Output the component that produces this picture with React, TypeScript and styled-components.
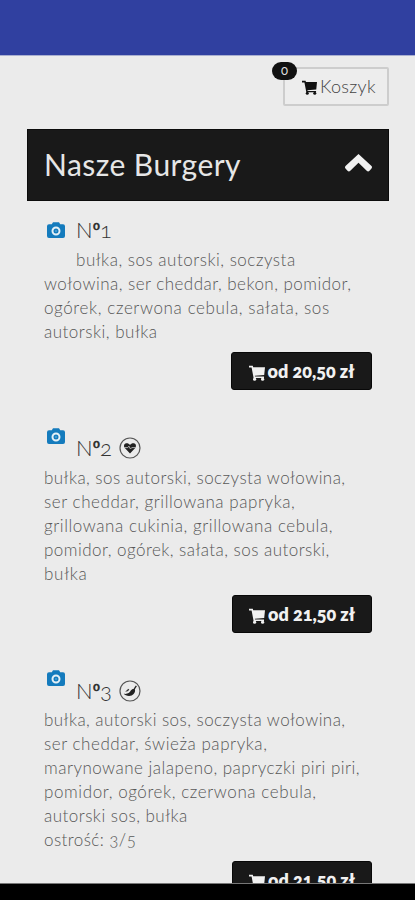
import React from 'react';
import styled, { createGlobalStyle } from 'styled-components';

const Global = createGlobalStyle`
  * { box-sizing: border-box; }
  html, body { margin: 0; background: #ebebeb; }
  body { font-family: Lato, "Open Sans", sans-serif; font-feature-settings: "onum" 1; }
`;

const Screen = styled.div`
  width: 415px;
  height: 900px;
  overflow: hidden;
  display: flex;
  flex-direction: column;
  background: #ebebeb;
`;

const StatusBar = styled.header`
  flex: 0 0 56px;
  background: #3040a0;
  border-bottom: 1px solid #a9afd0;
`;

const Content = styled.main`
  flex: 1;
  min-height: 0;
  overflow: hidden;
  padding: 11px 26px 0 27px;
`;

const NavBar = styled.footer`
  flex: 0 0 17px;
  background: #000;
  border-top: 1px solid #777;
`;

const CartRow = styled.div`
  display: flex;
  justify-content: flex-end;
  margin-bottom: 23px;
`;

const CartButton = styled.button`
  position: relative;
  display: flex;
  align-items: center;
  gap: 3px;
  width: 106px;
  height: 39px;
  padding: 0 0 2px 17px;
  border: 2px solid #cdcdcd;
  border-radius: 2px;
  background: #ededed;
  color: #444;
  font: 300 18px Lato, sans-serif;
  letter-spacing: 0.3px;
`;

const Badge = styled.span`
  position: absolute;
  left: -13px;
  top: -7px;
  width: 25px;
  height: 18px;
  border-radius: 9px;
  background: #111;
  color: #ddd;
  font: 400 13px/17px Lato, sans-serif;
  font-feature-settings: "onum" 1;
  letter-spacing: 0;
  text-align: center;
`;

const SectionHeader = styled.h1`
  display: flex;
  align-items: center;
  justify-content: space-between;
  height: 72px;
  margin: 0;
  padding: 0 16px 2px;
  background: #191919;
  border: 1px solid #0b0b0b;
  color: #e6e6e6;
  font-weight: 400;
  font-size: 30px;
  letter-spacing: 0.45px;
`;

const Item = styled.article`
  display: flex;
  flex-direction: column;
  padding: 0 17px;
`;

const ItemHead = styled.div<{ $height: number; $drop: number }>`
  display: flex;
  align-items: flex-start;
  height: ${p => p.$height}px;
  padding-left: 3px;
  padding-top: ${p => p.$height - p.$drop}px;
`;

const ItemTitle = styled.h2<{ $offset: number }>`
  display: flex;
  align-items: center;
  gap: 7px;
  height: 26px;
  margin: ${p => p.$offset}px 0 0 11px;
  color: #333;
  font-weight: 300;
  font-size: 22px;
  line-height: 26px;
`;

const Ordinal = styled.span`
  font-family: "Liberation Sans", sans-serif;
  font-weight: 700;
  font-size: 20px;
  line-height: 1;
`;

const Line = styled.div<{ $track: number; $indent?: boolean }>`
  height: 24px;
  padding-left: ${p => (p.$indent ? 32 : 0)}px;
  color: #585858;
  font-weight: 300;
  font-size: 17px;
  line-height: 24px;
  letter-spacing: ${p => p.$track}px;
  white-space: nowrap;
`;

const PriceButton = styled.button<{ $width: number; $gap: number }>`
  align-self: flex-end;
  display: flex;
  align-items: center;
  justify-content: center;
  gap: 3px;
  width: ${p => p.$width}px;
  height: 38px;
  margin: ${p => p.$gap}px 0 0;
  padding: 0;
  border: 1px solid #080808;
  border-radius: 3px;
  background: #191919;
  color: #f1f1f1;
  font: 800 18px Lato, sans-serif;
  font-feature-settings: "onum" 1;
  white-space: nowrap;
`;

const IconShift = styled.span<{ $by: number }>`
  display: flex;
  padding-top: ${p => p.$by}px;
`;

const CartIcon = ({ color, size }: { color: string; size: number }) => (
  <svg width={size} height={size} viewBox="0 0 16 16" fill={color}>
    <path d="M0 .8h3.800l.4 1.400H16l-.8 7.800-9.400.8.2.8h9v1.500H4.600L2.600 2.600H0z" />
    <circle cx="5.600" cy="14.200" r="1.600" />
    <circle cx="13.600" cy="14.200" r="1.600" />
  </svg>
);

const CameraIcon = () => (
  <svg width="18" height="16" viewBox="0 0 18 16">
    <path d="M4.800 2.200 6 .3h6l1.200 1.900H16a2 2 0 0 1 2 2V14a2 2 0 0 1-2 2H2a2 2 0 0 1-2-2V4.200a2 2 0 0 1 2-2z" fill="#147bbd" />
    <circle cx="9" cy="9" r="3.500" fill="none" stroke="#e4f0f6" strokeWidth="2" />
    <circle cx="9" cy="9" r="1.100" fill="#4ba0d3" />
  </svg>
);

const ChevronIcon = () => (
  <svg width="28" height="20" viewBox="0 0 28 20">
    <path d="M14.500 0 27.500 12a2 2 0 0 1 0 2.500l-2 2.200a2 2 0 0 1-2.800 0l-8.200-7.900-8.200 7.900a2 2 0 0 1-2.800 0l-2-2.200a2 2 0 0 1 0-2.500z" fill="#f2f2f2" />
  </svg>
);

const HeartIcon = () => (
  <svg width="22" height="22" viewBox="0 0 22 22">
    <circle cx="11" cy="11" r="10" fill="none" stroke="#555" strokeWidth="1.200" />
    <path d="M11 16.500 5.800 11C4.100 8.500 5.400 6.200 7.600 6.200c1.500 0 2.600.7 3.400 1.700.8-1 1.900-1.700 3.400-1.700 2.200 0 3.500 2.300 1.800 4.800z" fill="#222" />
    <path d="M5 10.600h3.800l1.100-1.500 1.600 2.900 1.200-1.400H17" fill="none" stroke="#bbb" strokeWidth=".9" />
  </svg>
);

const PepperIcon = () => (
  <svg width="22" height="22" viewBox="0 0 22 22">
    <circle cx="11" cy="11" r="10" fill="none" stroke="#555" strokeWidth="1.200" />
    <path d="M4.800 13.800c3.800.5 5.600-.8 7-3.200 1-1.600 2.800-2 4.200-1.100.6 3.400-2.300 6.600-6 6.500-2.300 0-4-.9-5.200-2.200z" fill="#222" />
    <path d="m14.700 9.800 2.600-4" stroke="#222" strokeWidth="1.300" />
    <path d="M6 11.600c2 .1 3.400-.6 4.300-2.200L9 8.700c-.7 1.300-1.600 2-3 2.900z" fill="#333" />
  </svg>
);

type Text = [string, number];
interface Burger {
  number: string;
  icon?: React.ReactNode;
  headHeight: number;
  headDrop: number;
  titleOffset: number;
  indent?: boolean;
  lines: Text[];
  price: string;
  buttonWidth: number;
  buttonGap: number;
}

const burgers: Burger[] = [
  {
    number: '1', headHeight: 47, headDrop: 26, titleOffset: -5, indent: true,
    lines: [
      ['bułka, sos autorski, soczysta', 0.51],
      ['wołowina, ser cheddar, bekon, pomidor,', 0.468],
      ['ogórek, czerwona cebula, sałata, sos', 0.615],
      ['autorski, bułka', 0.5],
    ],
    price: 'od 20,50 zł', buttonWidth: 141, buttonGap: 8,
  },
  {
    number: '2', icon: <HeartIcon />, headHeight: 76, headDrop: 38, titleOffset: 7,
    lines: [
      ['bułka, sos autorski, soczysta wołowina,', 0.455],
      ['ser cheddar, grillowana papryka,', 0.56],
      ['grillowana cukinia, grillowana cebula,', 0.567],
      ['pomidor, ogórek, sałata, sos autorski,', 0.465],
      ['bułka', 0.75],
    ],
    price: 'od 21,50 zł', buttonWidth: 140, buttonGap: 9,
  },
  {
    number: '3', icon: <PepperIcon />, headHeight: 75, headDrop: 38, titleOffset: 8,
    lines: [
      ['bułka, autorski sos, soczysta wołowina,', 0.455],
      ['ser cheddar, świeża papryka,', 0.55],
      ['marynowane jalapeno, papryczki piri piri,', 0.485],
      ['pomidor, ogórek, czerwona cebula,', 0.59],
      ['autorski sos, bułka', 0.48],
      ['ostrość: 3/5', 0.42],
    ],
    price: 'od 21,50 zł', buttonWidth: 140, buttonGap: 9,
  },
];

export default function App() {
  return (
    <>
      <Global />
      <Screen>
        <StatusBar />
        <Content>
          <CartRow>
            <CartButton>
              <Badge>0</Badge>
              <IconShift $by={3}><CartIcon color="#111" size={15} /></IconShift>
              Koszyk
            </CartButton>
          </CartRow>
          <SectionHeader>
            Nasze Burgery
            <ChevronIcon />
          </SectionHeader>
          {burgers.map(b => (
            <Item key={b.number}>
              <ItemHead $height={b.headHeight} $drop={b.headDrop}>
                <CameraIcon />
                <ItemTitle $offset={b.titleOffset}>
                  <span>N<Ordinal>º</Ordinal>{b.number}</span>
                  {b.icon}
                </ItemTitle>
              </ItemHead>
              {b.lines.map(([text, track], i) => (
                <Line key={text} $track={track} $indent={b.indent && i === 0}>{text}</Line>
              ))}
              <PriceButton $width={b.buttonWidth} $gap={b.buttonGap}>
                <IconShift $by={3}><CartIcon color="#f1f1f1" size={16} /></IconShift>
                {b.price}
              </PriceButton>
            </Item>
          ))}
        </Content>
        <NavBar />
      </Screen>
    </>
  );
}
